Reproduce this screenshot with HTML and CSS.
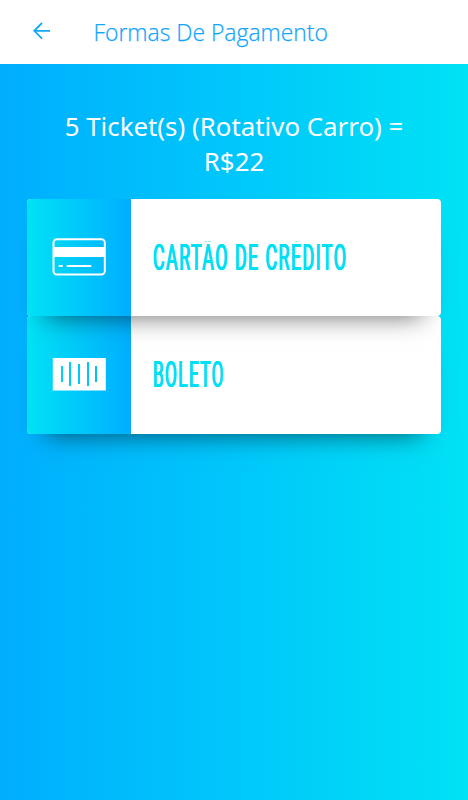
FILE: index.html
```html
<!DOCTYPE html>
<html lang="pt-BR">
<head>
<meta charset="utf-8">
<title>Formas De Pagamento</title>
<link rel="stylesheet" href="styles.css">
</head>
<body>
<header class="bar">
  <svg class="back" width="18" height="18" viewBox="0 0 18 18"><path d="M17 8.8H1.4M9 1L1.2 8.8L9 16.6"/></svg>
  <h1 class="title">Formas De Pagamento</h1>
</header>
<main class="page">
  <p class="summary">5 Ticket(s) (Rotativo Carro) =<br>R$22</p>
  <section class="card">
    <div class="thumb">
      <svg width="54" height="38" viewBox="0 0 54 38">
        <rect x="1.5" y="1.2" width="51.3" height="35.4" rx="3.5" fill="none" stroke="#fff" stroke-width="2"/>
        <path fill="#fff" d="M1 9h52v10H1zM6.700 27h4v2h-4zM14.700 27h24.600v2h-24.600z"/>
      </svg>
    </div>
    <div class="body"><span class="label credit">CARTÃO DE CRÉDITO</span></div>
  </section>
  <section class="card">
    <div class="thumb">
      <svg width="54" height="34" viewBox="0 0 54 34">
        <path fill="#fff" fill-rule="evenodd" d="M.8 1h53v32.600H.8zM9 9v16h2V9zM17 5v24h2V5zM26 7v20h2V7zM35 5v24h2V5zM43 9v16h2V9z"/>
      </svg>
    </div>
    <div class="body"><span class="label boleto">BOLETO</span></div>
  </section>
</main>
</body>
</html>
```
FILE: styles.css
```css
* { box-sizing: border-box; }
body {
  margin: 0;
  height: 800px;
  display: flex;
  flex-direction: column;
  font-family: "Open Sans", "Noto Sans", sans-serif;
  overflow: hidden;
}
.bar {
  height: 64px;
  flex: none;
  display: flex;
  align-items: center;
  padding: 0 32.500px;
  background: #fff;
}
.back {
  margin-top: -3px;
  fill: none;
  stroke: #12a8f8;
  stroke-width: 1.8;
}
.title {
  margin: 2px 0 0 43px;
  font-size: 22.900px;
  line-height: 32px;
  font-weight: 300;
  color: #12a5fa;
  -webkit-text-stroke: .25px #12a5fa;
  white-space: nowrap;
}
.page {
  flex: 1;
  padding: 45px 27px 0;
  background: linear-gradient(90deg, #00aefe, #00c6fb 48%, #00e2f5);
}
.summary {
  margin: 0 0 20px;
  color: #fff;
  font-family: "Noto Sans", sans-serif;
  font-size: 25.850px;
  line-height: 35px;
  text-align: center;
  white-space: nowrap;
}
.card {
  position: relative;
  z-index: 1;
  display: flex;
  height: 117.300px;
  border-radius: 4px;
  background: #fff;
  box-shadow: 0 19px 24px -19px rgba(0, 0, 0, .6);
}
.card:first-of-type { z-index: 2; }
.thumb {
  flex: none;
  width: 104px;
  display: flex;
  align-items: center;
  justify-content: center;
  border-radius: 4px 0 0 4px;
  background: linear-gradient(90deg, #00e2f5, #00aefe);
}
.thumb svg { margin-top: -2px; }
.body {
  flex: 1;
  min-width: 0;
  display: flex;
  align-items: center;
  padding-left: 21.500px;
}
.label {
  margin-top: 1px;
  font-family: Roboto, sans-serif;
  font-size: 36px;
  line-height: 36px;
  font-weight: 400;
  letter-spacing: 3px;
  color: #00e0f5;
  text-shadow: 1px 0 #00e0f5, -1px 0 #00e0f5;
  white-space: nowrap;
  transform-origin: 0 50%;
  clip-path: inset(1px -2px 0 -2px);
}
.credit { transform: scaleX(.494); }
.boleto { transform: scaleX(.475); }
```
